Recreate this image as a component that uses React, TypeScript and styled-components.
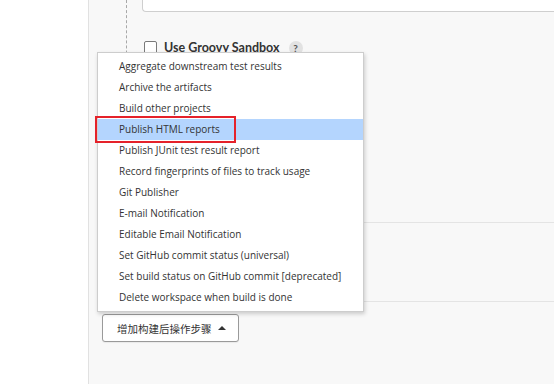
import React from 'react'
import styled, { createGlobalStyle } from 'styled-components'

const items = [
  'Aggregate downstream test results',
  'Archive the artifacts',
  'Build other projects',
  'Publish HTML reports',
  'Publish JUnit test result report',
  'Record fingerprints of files to track usage',
  'Git Publisher',
  'E-mail Notification',
  'Editable Email Notification',
  'Set GitHub commit status (universal)',
  'Set build status on GitHub commit [deprecated]',
  'Delete workspace when build is done',
]

const ACTIVE = 3

export default function App() {
  return (
    <>
      <GlobalStyle />
      <Page>
        <Sidebar />
        <Main>
          <Nested>
            <ScriptBox />
            <CheckRow>
              <CheckBox />
              <CheckLabel>Use Groovy Sandbox</CheckLabel>
              <Help>?</Help>
            </CheckRow>
          </Nested>
          <Row $gap={22} $height={79} />
          <Row $height={12} />
          <ButtonRow>
            <DropdownWrap>
              <Menu>
                {items.map((label, i) => (
                  <MenuItem key={label} $active={i === ACTIVE}>
                    {label}
                    {i === ACTIVE && <Highlight />}
                  </MenuItem>
                ))}
              </Menu>
              <AddButton>
                增加构建后操作步骤
                <Caret />
              </AddButton>
            </DropdownWrap>
          </ButtonRow>
        </Main>
      </Page>
    </>
  )
}

const GlobalStyle = createGlobalStyle`
  html, body {
    margin: 0;
    padding: 0;
    background: #fff;
  }
  body {
    font-family: "Open Sans", "Noto Sans CJK SC", sans-serif;
  }
`

const Page = styled.div`
  display: flex;
  width: 554px;
  height: 384px;
  overflow: hidden;
`

const Sidebar = styled.div`
  width: 88px;
  flex-shrink: 0;
  background: #fff;
`

const Main = styled.div`
  flex: 1;
  display: flex;
  flex-direction: column;
  background: #f8f8f8;
  border-left: 1px solid #e1e1e1;
`

const Nested = styled.div`
  margin-left: 37px;
  height: 200px;
  padding-left: 15px;
  border-left: 1px dashed #a8a8a8;
`

const ScriptBox = styled.div`
  height: 11px;
  background: #fff;
  border: 1px solid #cfcfcf;
  border-top: none;
  border-right: none;
  border-bottom-left-radius: 4px;
`

const CheckRow = styled.div`
  display: flex;
  align-items: center;
  margin-top: 28px;
  margin-left: 2px;
`

const CheckBox = styled.span`
  width: 11px;
  height: 12px;
  border: 1px solid #7a7a7a;
  border-radius: 2px;
  background: #fff;
`

const CheckLabel = styled.span`
  margin-left: 7px;
  font-family: Lato, "Open Sans", sans-serif;
  font-weight: 700;
  font-size: 12.5px;
  color: #333;
`

const Help = styled.span`
  margin-left: 9px;
  width: 14px;
  height: 14px;
  border-radius: 50%;
  background: #e2e2e2;
  color: #555;
  font-family: Lato, sans-serif;
  font-weight: 700;
  font-size: 10px;
  display: flex;
  align-items: center;
  justify-content: center;
`

const Row = styled.div<{ $gap?: number; $height: number }>`
  flex-shrink: 0;
  margin-left: 37px;
  margin-top: ${(p) => p.$gap ?? 0}px;
  height: ${(p) => p.$height}px;
  box-sizing: border-box;
  border-top: 1px solid #e4e4e4;
`

const ButtonRow = styled.div`
  margin-left: 13px;
  margin-top: 1px;
`

const DropdownWrap = styled.div`
  position: relative;
  display: inline-block;
`

const Menu = styled.ul`
  position: absolute;
  left: -5px;
  bottom: calc(100% + 2px);
  width: 265px;
  margin: 0;
  padding: 3px 0;
  list-style: none;
  background: #fff;
  border: 1px solid #cdcdcd;
  box-shadow: 1px 2px 4px rgba(0, 0, 0, 0.18);
  z-index: 2;
`

const MenuItem = styled.li<{ $active?: boolean }>`
  position: relative;
  height: 21px;
  line-height: 21px;
  padding-left: 21px;
  font-size: 10px;
  color: #333;
  white-space: nowrap;
  background: ${(p) => (p.$active ? '#b4d5fe' : 'transparent')};
`

const Highlight = styled.span`
  position: absolute;
  left: -3px;
  top: -3px;
  width: 141px;
  height: 27px;
  box-sizing: border-box;
  border: 2px solid #e5222a;
`

const AddButton = styled.button`
  display: flex;
  align-items: center;
  width: 137px;
  height: 28px;
  padding: 0 0 0 14px;
  background: #fff;
  border: 1px solid #9a9a9a;
  border-radius: 3px;
  box-shadow: 0 1px 1px rgba(0, 0, 0, 0.06);
  font-family: "Noto Sans CJK SC", sans-serif;
  font-size: 10.5px;
  color: #333;
`

const Caret = styled.span`
  margin-left: 6px;
  width: 0;
  height: 0;
  border-left: 4px solid transparent;
  border-right: 4px solid transparent;
  border-bottom: 4px solid #333;
`
